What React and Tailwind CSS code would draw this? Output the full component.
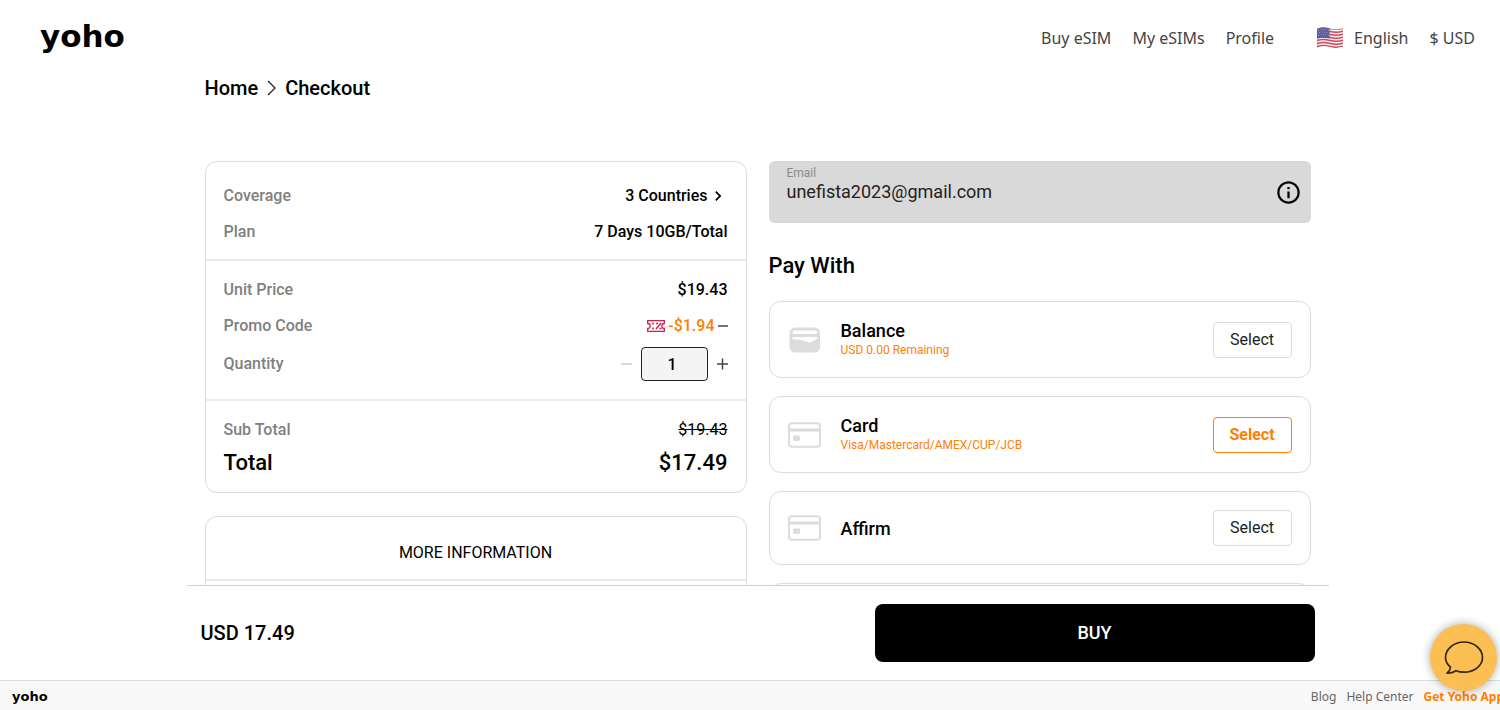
import { useState } from "react";
import { MdInfoOutline, MdChevronRight } from "react-icons/md";

const methods = [
  { id: "balance", name: "Balance", note: "USD 0.00 Remaining", icon: "wallet" },
  { id: "card", name: "Card", note: "Visa/Mastercard/AMEX/CUP/JCB", icon: "card" },
  { id: "affirm", name: "Affirm", note: "", icon: "card" },
];

function Flag() {
  return (
    <svg width="28" height="22" viewBox="0 0 28 22" aria-hidden="true">
      <defs>
        <clipPath id="wave">
          <path d="M1 2C6-.5 10 .5 14 1.500S22 3 27 1V19.500C22 21.500 18 21 14 20S6 18.500 1 21Z" />
        </clipPath>
      </defs>
      <g clipPath="url(#wave)">
        <rect width="28" height="22" fill="#f3eef0" />
        <g fill="none" stroke="#cf4a5c" strokeWidth="1.500">
          <path d="M0 2C6-.5 10 .5 14 1.500S22 3 28 1" />
          <path d="M0 5C6 2.500 10 3.500 14 4.500S22 6 28 4" />
          <path d="M0 8C6 5.500 10 6.500 14 7.500S22 9 28 7" />
          <path d="M0 11C6 8.500 10 9.500 14 10.500S22 12 28 10" />
          <path d="M0 14C6 11.500 10 12.500 14 13.500S22 15 28 13" />
          <path d="M0 17C6 14.500 10 15.500 14 16.500S22 18 28 16" />
          <path d="M0 20C6 17.500 10 18.500 14 19.500S22 21 28 19" />
        </g>
        <path d="M0 0H13.500V11.500C9 10.500 5 10 0 12Z" fill="#5a5d96" />
        <g fill="none" stroke="#a9abcb" strokeWidth="1" strokeDasharray="1 1.600">
          <path d="M2 3.500C6 2 9 2.500 13 3.500" />
          <path d="M3 6C6 4.500 9 5 13 6" />
          <path d="M2 8.500C6 7 9 7.500 13 8.500" />
        </g>
      </g>
    </svg>
  );
}

function TicketIcon() {
  return (
    <svg width="18" height="12" viewBox="0 0 18 12" fill="none" stroke="#d0214b" aria-hidden="true">
      <path d="M.7.700H17.300V3.500A2.500 2.500 0 0 0 17.300 8.500V11.300H.7V8.500A2.500 2.500 0 0 0 .7 3.500Z" strokeWidth="1.300" />
      <path d="M6 2.500V4.500M6 7.500V9.500M9 9L14 3" strokeWidth="1.500" />
      <path d="M9 3.500H11M12.500 8.500H14.500" strokeWidth="1.500" />
    </svg>
  );
}

function MethodIcon({ type }) {
  if (type === "wallet") {
    return (
      <svg width="33" height="26" viewBox="0 0 33 26" aria-hidden="true">
        <rect x="1.500" y=".5" width="30.500" height="25" rx="5.500" fill="#dcdcdc" />
        <rect x="4.500" y="3.500" width="24.500" height="3.500" rx="1.700" fill="#fff" />
        <path d="M4.500 10H29V12L23 15.300Q21.500 16 20 15.300L15 13.400L4.500 12Z" fill="#fff" />
      </svg>
    );
  }
  return (
    <svg width="33" height="26" viewBox="0 0 33 26" aria-hidden="true">
      <rect x="1" y="1.200" width="31" height="23.600" rx="3" fill="none" stroke="#dcdcdc" strokeWidth="2" />
      <rect x="1" y="6.500" width="31" height="3" fill="#dcdcdc" />
      <rect x="5" y="13.500" width="7" height="5.500" rx="1" fill="#dcdcdc" />
    </svg>
  );
}

function Row({ label, children }) {
  return (
    <div className="flex h-9 items-center justify-between">
      <span className="text-[#808080]">{label}</span>
      {children}
    </div>
  );
}

function App() {
  const [selected, setSelected] = useState("card");
  const [quantity, setQuantity] = useState(1);
  const [email, setEmail] = useState("unefista2023@gmail.com");

  return (
    <div className="flex h-screen flex-col overflow-hidden bg-white font-[Roboto,sans-serif] text-black">
      <header className="flex h-[76px] shrink-0 items-center justify-between pr-[25px] pl-10 font-['Noto_Sans',sans-serif] text-base text-[#444]">
        <a href="#" className="pb-1 font-['DejaVu_Sans',sans-serif] text-[31px] leading-8 font-bold text-black">yoho</a>
        <nav className="flex items-center gap-[21px]">
          <a href="#">Buy eSIM</a>
          <a href="#">My eSIMs</a>
          <a href="#">Profile</a>
          <button className="ml-[21px] flex items-center gap-[10px]">
            <Flag />
            English
          </button>
          <button>$ USD</button>
        </nav>
      </header>

      <main className="min-h-0 flex-1 overflow-y-auto pl-[15px] [scrollbar-width:none]">
        <div className="mx-auto max-w-[1142px] px-[18px]">
          <div className="flex h-6 items-center gap-2 text-xl font-medium">
            <a href="#">Home</a>
            <svg width="11" height="16" viewBox="0 0 11 16" fill="none" stroke="#222" strokeWidth="1.300" aria-hidden="true">
              <path d="M2 1L9 8L2 15" />
            </svg>
            <span>Checkout</span>
          </div>

          <div className="mt-[61px] grid grid-cols-2 items-start gap-[22px]">
            <div className="flex flex-col gap-[23px] text-base font-medium">
              <section className="rounded-xl border border-[#dcdcdc]">
                <div className="border-b-2 border-[#ebebeb] px-[18px] pt-4 pb-[9px]">
                  <Row label="Coverage">
                    <button className="flex items-center">
                      3 Countries
                      <MdChevronRight size={20} />
                    </button>
                  </Row>
                  <Row label="Plan">
                    <span>7 Days 10GB/Total</span>
                  </Row>
                </div>
                <div className="border-b-2 border-[#ebebeb] px-[18px] pt-[11px] pb-[15px]">
                  <Row label="Unit Price">
                    <span>$19.43</span>
                  </Row>
                  <Row label="Promo Code">
                    <div className="flex items-center gap-[3px] text-[#ff7f00]">
                      <TicketIcon />
                      <span>-$1.94</span>
                      <button aria-label="Remove promo code" className="h-5 text-[#444]">
                        <svg width="10" height="12" viewBox="0 0 10 12" stroke="currentColor" strokeWidth="1.500">
                          <path d="M0 6H10" />
                        </svg>
                      </button>
                    </div>
                  </Row>
                  <div className="flex h-10 items-center justify-between">
                    <label htmlFor="quantity" className="text-[#808080]">Quantity</label>
                    <div className="flex items-center gap-[9px]">
                      <button aria-label="Less" className="text-[#ccc]" onClick={() => setQuantity(Math.max(1, quantity - 1))}>
                        <svg width="11" height="12" viewBox="0 0 11 12" stroke="currentColor" strokeWidth="1.500">
                          <path d="M0 6H11" />
                        </svg>
                      </button>
                      <input
                        id="quantity"
                        className="h-[34px] w-[67px] rounded-sm border border-[#222] bg-[#f4f4f4] pr-1 text-center"
                        value={quantity}
                        onChange={(e) => setQuantity(Number(e.target.value) || 1)}
                      />
                      <button aria-label="More" className="text-[#444]" onClick={() => setQuantity(quantity + 1)}>
                        <svg width="11" height="12" viewBox="0 0 11 12" stroke="currentColor" strokeWidth="1.500">
                          <path d="M0 6H11M5.500 .5V11.500" />
                        </svg>
                      </button>
                    </div>
                  </div>
                </div>
                <div className="px-[18px] pt-[11px] pb-[14px]">
                  <Row label="Sub Total">
                    <s className="font-normal">$19.43</s>
                  </Row>
                  <div className="flex items-center justify-between text-[22px] leading-[30px]">
                    <span>Total</span>
                    <span>$17.49</span>
                  </div>
                </div>
              </section>

              <section className="rounded-xl border border-[#dcdcdc]">
                <h2 className="border-b-2 border-[#ebebeb] pt-6 pb-[14px] text-center font-normal">MORE INFORMATION</h2>
                <div className="h-24" />
              </section>
            </div>

            <div>
              <div className="flex h-[62px] items-center justify-between rounded-md bg-[#d9d9d9] pr-[9px] pl-[18px]">
                <div className="flex h-full flex-1 flex-col pt-[6px]">
                  <label htmlFor="email" className="text-xs leading-[13px] text-[#8a8a8a]">Email</label>
                  <input
                    id="email"
                    type="email"
                    className="bg-transparent text-lg leading-6 text-[#222] outline-none"
                    value={email}
                    onChange={(e) => setEmail(e.target.value)}
                  />
                </div>
                <button aria-label="About this email">
                  <MdInfoOutline size={27} />
                </button>
              </div>

              <h2 className="mt-7 mb-5 text-[22px] leading-[30px] font-medium">Pay With</h2>

              <ul className="flex flex-col gap-[18px] pb-6">
                {methods.map((m) => (
                  <li key={m.id} className="flex items-center rounded-xl border border-[#dcdcdc] px-[18px] py-[18px]">
                    <MethodIcon type={m.icon} />
                    <div className="ml-5 flex-1">
                      <h3 className="text-lg leading-[21px] font-medium">{m.name}</h3>
                      {m.note ? (
                        <p className="text-xs leading-[18px] text-[#ff7f00]">{m.note}</p>
                      ) : null}
                    </div>
                    <button
                      aria-pressed={selected === m.id}
                      onClick={() => setSelected(m.id)}
                      className={
                        selected === m.id
                          ? "h-9 w-[79px] rounded-sm border border-[#ff7f00] text-base font-bold text-[#ff7f00]"
                          : "h-9 w-[79px] rounded-sm border border-[#dcdcdc] text-base text-[#222]"
                      }
                    >
                      Select
                    </button>
                  </li>
                ))}
                {/* slot for the next payment method */}
                <li className="h-[74px] rounded-xl border border-[#dcdcdc]" />
              </ul>
            </div>
          </div>
        </div>
      </main>

      <div className="shrink-0 pl-[15px]">
        <div className="mx-auto flex max-w-[1142px] items-center justify-between border-t border-[#d0d0d0] px-[14px] py-[18px]">
          <span className="text-xl font-medium">USD 17.49</span>
          <button className="h-[58px] w-[440px] rounded-lg bg-black text-lg font-medium text-white">BUY</button>
        </div>
      </div>

      <footer className="flex h-[30px] shrink-0 items-center justify-between border-t border-[#dcdcdc] bg-[#f8f8f8] pt-0.5 pl-3 font-['Noto_Sans',sans-serif] text-xs text-[#666]">
        <a href="#" className="font-['DejaVu_Sans',sans-serif] text-[13px] font-bold text-black">yoho</a>
        <nav className="flex gap-[10px] whitespace-nowrap">
          <a href="#">Blog</a>
          <a href="#">Help Center</a>
          <a href="#" className="-mr-1 font-bold text-[#ff7f00]">Get Yoho App</a>
        </nav>
      </footer>

      <button
        aria-label="Chat"
        className="fixed right-[3px] bottom-[19px] flex size-[67px] items-center justify-center rounded-full bg-[#fbbf54] shadow-[0_0_10px_rgba(0,0,0,0.35)]"
      >
        <svg width="40" height="34" viewBox="0 0 40 34" fill="none" stroke="#332a18" strokeWidth="1.700" strokeLinejoin="round" aria-hidden="true">
          <path d="M6.500 26.200C3.300 23.500 1.500 20 1.500 16.500C1.500 8.500 9.500 1 20 1S38.500 8.500 38.500 16.500S30.500 31.200 20 31.200C17 31.200 14.500 30.700 12 29.700C9.500 31.500 6.500 32.200 3 32.200C5 30.500 6.300 28.500 6.500 26.200Z" />
        </svg>
      </button>
    </div>
  );
}

export default App;
